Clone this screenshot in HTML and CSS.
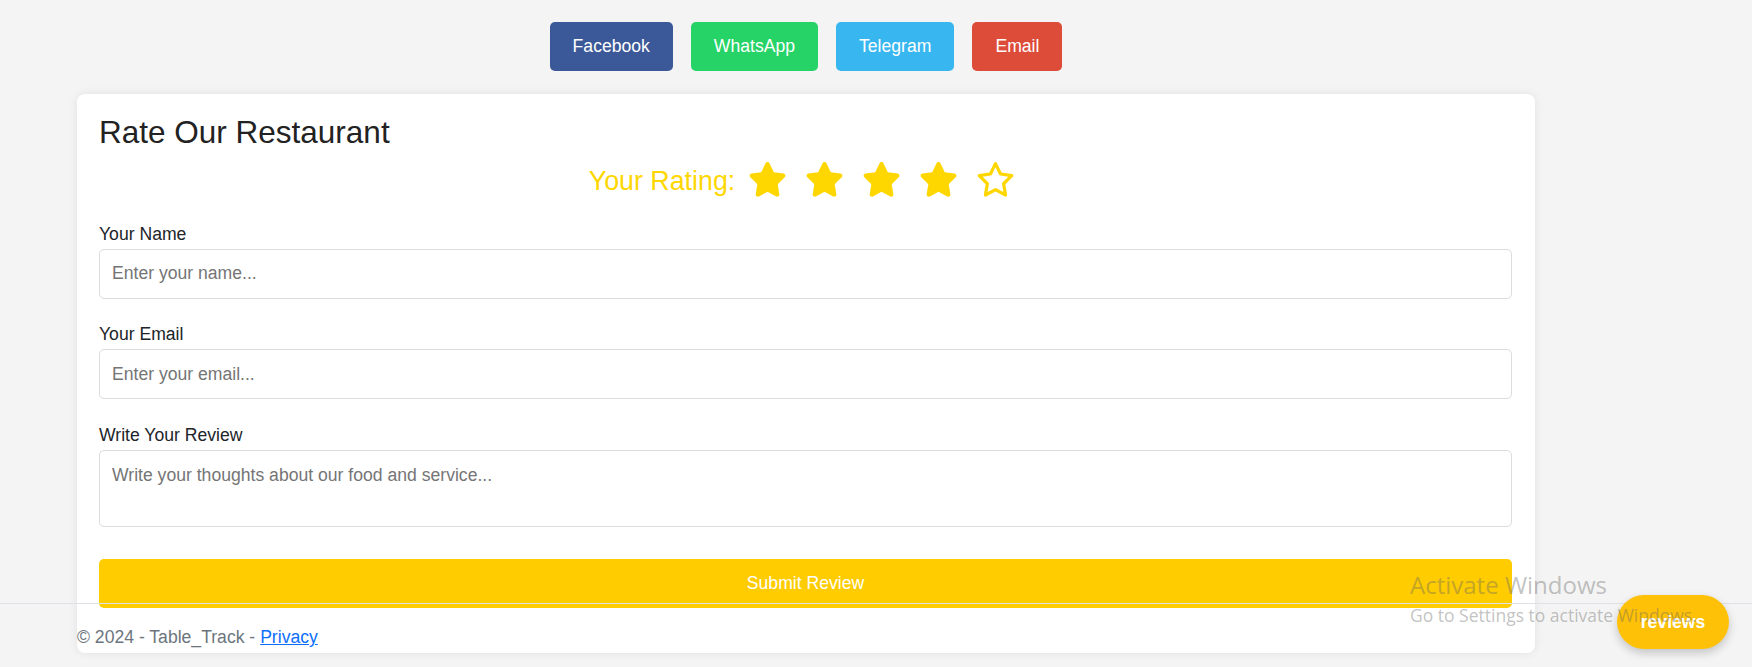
FILE: index.html
```html
<!DOCTYPE html>
<html lang="en">
<head>
<meta charset="utf-8">
<title>Rate Our Restaurant - Table_Track</title>
<link rel="stylesheet" href="styles.css">
</head>
<body>
<div class="page">
  <div class="share">
    <a class="share-btn fb" href="#">Facebook</a>
    <a class="share-btn wa" href="#">WhatsApp</a>
    <a class="share-btn tg" href="#">Telegram</a>
    <a class="share-btn em" href="#">Email</a>
  </div>

  <div class="card">
    <h2 class="card-title">Rate Our Restaurant</h2>
    <div class="rating">
      <span class="rating-label">Your Rating:</span>
      <span class="stars">
        <svg class="star" viewBox="0 0 576 512"><path d="M316.9 18C311.6 7 300.4 0 288.1 0s-23.4 7-28.8 18L195 150.3 51.4 171.5c-12 1.8-22 10.2-25.7 21.7s-.7 24.2 7.9 32.7L137.8 329 113.2 474.7c-2 12 3 24.2 12.9 31.3s23 8 33.8 2.3l128.3-68.5 128.3 68.5c10.8 5.7 23.9 4.9 33.8-2.3s14.9-19.3 12.9-31.3L438.5 329 542.7 225.9c8.6-8.5 11.7-21.2 7.9-32.7s-13.7-19.9-25.7-21.7L381.2 150.3 316.9 18z"/></svg>
        <svg class="star" viewBox="0 0 576 512"><path d="M316.9 18C311.6 7 300.4 0 288.1 0s-23.4 7-28.8 18L195 150.3 51.4 171.5c-12 1.8-22 10.2-25.7 21.7s-.7 24.2 7.9 32.7L137.8 329 113.2 474.7c-2 12 3 24.2 12.9 31.3s23 8 33.8 2.3l128.3-68.5 128.3 68.5c10.8 5.7 23.9 4.9 33.8-2.3s14.9-19.3 12.9-31.3L438.5 329 542.7 225.9c8.6-8.5 11.7-21.2 7.9-32.7s-13.7-19.9-25.7-21.7L381.2 150.3 316.9 18z"/></svg>
        <svg class="star" viewBox="0 0 576 512"><path d="M316.9 18C311.6 7 300.4 0 288.1 0s-23.4 7-28.8 18L195 150.3 51.4 171.5c-12 1.8-22 10.2-25.7 21.7s-.7 24.2 7.9 32.7L137.8 329 113.2 474.7c-2 12 3 24.2 12.9 31.3s23 8 33.8 2.3l128.3-68.5 128.3 68.5c10.8 5.7 23.9 4.9 33.8-2.3s14.9-19.3 12.9-31.3L438.5 329 542.7 225.9c8.6-8.5 11.7-21.2 7.9-32.7s-13.7-19.9-25.7-21.7L381.2 150.3 316.9 18z"/></svg>
        <svg class="star" viewBox="0 0 576 512"><path d="M316.9 18C311.6 7 300.4 0 288.1 0s-23.4 7-28.8 18L195 150.3 51.4 171.5c-12 1.8-22 10.2-25.7 21.7s-.7 24.2 7.9 32.7L137.8 329 113.2 474.7c-2 12 3 24.2 12.9 31.3s23 8 33.8 2.3l128.3-68.5 128.3 68.5c10.8 5.7 23.9 4.9 33.8-2.3s14.9-19.3 12.9-31.3L438.5 329 542.7 225.9c8.6-8.5 11.7-21.2 7.9-32.7s-13.7-19.9-25.7-21.7L381.2 150.3 316.9 18z"/></svg>
        <svg class="star" viewBox="0 0 576 512"><path d="M287.9 0c9.2 0 17.6 5.2 21.6 13.5l68.6 141.3 153.2 22.6c9 1.3 16.5 7.6 19.3 16.3s.5 18.1-5.9 24.5L433.6 328.4l26.2 155.6c1.5 9-2.2 18.1-9.7 23.5s-17.3 6-25.3 1.7l-137-73.2L151 509.1c-8.1 4.3-17.9 3.7-25.3-1.7s-11.2-14.5-9.7-23.5l26.2-155.6L31.1 218.2c-6.5-6.4-8.7-15.9-5.9-24.5s10.3-14.9 19.3-16.3l153.2-22.6L266.3 13.5C270.4 5.2 278.7 0 287.9 0zm0 79L235.4 187.2c-3.5 7.1-10.2 12.1-18.1 13.3L99 217.9 184.9 303c5.5 5.5 8.1 13.3 6.8 21L171.4 443.7l105.2-56.2c7.1-3.8 15.6-3.8 22.6 0l105.2 56.2L384.2 324.1c-1.3-7.7 1.2-15.5 6.8-21l85.9-85.1L358.6 200.5c-7.8-1.2-14.6-6.1-18.1-13.3L287.9 79z"/></svg>
      </span>
    </div>

    <form class="review-form">
      <div class="group">
        <label class="label" for="name">Your Name</label>
        <input class="field" id="name" type="text" placeholder="Enter your name...">
      </div>
      <div class="group">
        <label class="label" for="email">Your Email</label>
        <input class="field" id="email" type="email" placeholder="Enter your email...">
      </div>
      <div class="group">
        <label class="label" for="review">Write Your Review</label>
        <textarea class="field area" id="review" placeholder="Write your thoughts about our food and service..."></textarea>
      </div>
      <button class="submit" type="button">Submit Review</button>
    </form>
  </div>
</div>

<footer class="footer">
  &copy; 2024 - Table_Track - <a href="#">Privacy</a>
</footer>

<a class="reviews-fab" href="#">reviews</a>

<div class="watermark">
  <div class="wm-title">Activate Windows</div>
  <div class="wm-sub">Go to Settings to activate Windows.</div>
</div>
</body>
</html>
```
FILE: styles.css
```css
html, body {
  margin: 0;
  padding: 0;
}

body {
  background: #f4f4f4;
  font-family: "Liberation Sans", Arial, sans-serif;
  font-size: 17.6px;
  color: #212529;
  height: 667px;
  overflow: hidden;
  position: relative;
}

.page {
  margin-left: 77px;
  width: 1458px;
  padding-top: 22px;
}

.share {
  display: flex;
  justify-content: center;
  gap: 18px;
}

.share-btn {
  display: flex;
  align-items: center;
  justify-content: center;
  height: 49px;
  padding: 0 23px;
  border-radius: 5px;
  color: #fff;
  text-decoration: none;
  font-size: 17.6px;
}

.fb { background: #3b5998; }
.wa { background: #25d366; }
.tg { background: #37b6f0; }
.em { background: #dd4b39; }

.card {
  margin-top: 23px;
  background: #fff;
  border-radius: 8px;
  box-shadow: 0 0 10px rgba(0, 0, 0, 0.08);
  padding: 20px 23px 45px 22px;
}

.card-title {
  margin: 0;
  font-size: 31.5px;
  font-weight: 400;
  line-height: 1.2;
  color: #222;
}

.rating {
  display: flex;
  align-items: center;
  justify-content: center;
  margin-top: 10px;
  padding-right: 7px;
  color: #ffd700;
}

.rating-label {
  font-size: 26.8px;
  line-height: 1.15;
  margin-top: 4px;
}

.stars {
  display: flex;
  align-items: center;
  gap: 18px;
  margin-left: 13px;
}

.star {
  display: block;
  width: 39px;
  height: 34.7px;
  fill: #ffd700;
}

.review-form {
  margin-top: 27px;
}

.group {
  display: flex;
  flex-direction: column;
  margin-bottom: 25.5px;
}

.label {
  line-height: 1.2;
  margin-bottom: 4px;
}

.field {
  box-sizing: border-box;
  width: 100%;
  height: 50px;
  border: 1px solid #dcdcdc;
  border-radius: 5px;
  padding: 12px;
  font-family: "Liberation Sans", Arial, sans-serif;
  font-size: 17.6px;
  line-height: 24px;
  color: #212529;
  background: #fff;
}

.field::placeholder {
  color: #757575;
}

.area {
  height: 77px;
  resize: none;
  display: block;
}

.submit {
  display: block;
  width: 100%;
  height: 49px;
  margin-top: 32px;
  border: none;
  border-radius: 5px;
  background: #ffcc00;
  color: #fff;
  font-family: "Liberation Sans", Arial, sans-serif;
  font-size: 17.6px;
}

.footer {
  position: absolute;
  left: 0;
  right: 0;
  bottom: 0;
  border-top: 1px solid #dee2e6;
  line-height: 59px;
  padding-top: 4px;
  padding-left: 77px;
  color: #6c757d;
  white-space: nowrap;
}

.footer a {
  color: #0d6efd;
  text-decoration: underline;
}

.reviews-fab {
  position: absolute;
  right: 23px;
  bottom: 18px;
  width: 112px;
  height: 54px;
  border-radius: 27px;
  background: #ffc107;
  color: #fff;
  font-weight: 700;
  font-size: 17.6px;
  display: flex;
  align-items: center;
  justify-content: center;
  text-decoration: none;
  box-shadow: 0 4px 10px rgba(0, 0, 0, 0.2);
}

.watermark {
  position: absolute;
  left: 1410px;
  top: 570px;
  color: rgba(100, 100, 100, 0.4);
  font-family: "Open Sans", "Noto Sans", sans-serif;
  pointer-events: none;
  z-index: 2;
}

.wm-title {
  font-size: 24px;
  line-height: 30px;
}

.wm-sub {
  font-size: 17.5px;
  line-height: 22px;
  margin-top: 4px;
  white-space: nowrap;
}
```
